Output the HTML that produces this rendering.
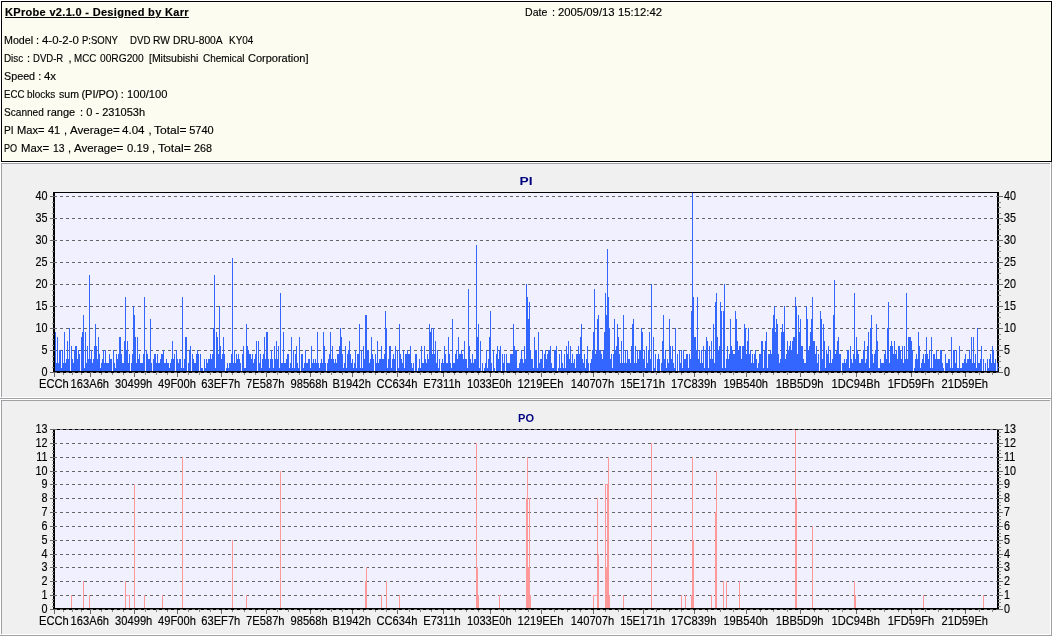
<!DOCTYPE html>
<html lang="en"><head><meta charset="utf-8"><title>KProbe v2.1.0</title>
<style>
html,body{margin:0;padding:0;background:#fff;}
body{width:1052px;height:636px;position:relative;overflow:hidden;font-family:"Liberation Sans","DejaVu Sans",sans-serif;font-size:11px;color:#000;}
#info{will-change:transform;position:absolute;left:1px;top:1px;width:1049px;height:159px;border:1px solid #000;background:#fcfcf0;box-shadow:inset 0 0 0 1px #fffffa;}
#info div,#info span{-webkit-text-stroke:.15px #000;position:absolute;white-space:pre;line-height:12px;height:12px;transform-origin:0 0;}
#info .h{font-weight:bold;text-decoration:underline;}
.panel{position:absolute;left:0;width:1052px;height:237px;background:#f0f0f0;box-shadow:inset -1px -1px 0 #a0a0a4,inset 1px 1px 0 #fff,inset -2px -2px 0 #fff,inset 2px 2px 0 #a0a0a4;}
.ch{position:absolute;left:0;will-change:transform;}
.l{font-family:"Liberation Sans","DejaVu Sans",sans-serif;font-size:12px;fill:#000;stroke:#000;stroke-width:.15px;}
.t{font-family:"Liberation Sans","DejaVu Sans",sans-serif;font-size:11px;font-weight:bold;fill:#000080;}
</style></head><body>
<div id="info">
<div class="h" style="left:3px;top:4px;letter-spacing:.32px">KProbe v2.1.0 - Designed by Karr</div>

<div class="ln" style="left:0;top:0">
<span style="left:2.4px;top:32px;transform:scaleX(0.972)">Model</span> 
<span style="left:34.0px;top:32px">:</span> 
<span style="left:40.0px;top:32px;transform:scaleX(1.038)">4-0-2-0</span> 
<span style="left:79.5px;top:32px;transform:scaleX(0.864)">P:SONY</span> 
<span style="left:128.0px;top:32px;transform:scaleX(0.876)">DVD</span> 
<span style="left:150.9px;top:32px;transform:scaleX(0.934)">RW</span> 
<span style="left:170.9px;top:32px;transform:scaleX(0.934)">DRU-800A</span> 
<span style="left:227.2px;top:32px;transform:scaleX(0.903)">KY04</span> 
</div>
<div class="ln" style="left:0;top:0">
<span style="left:2.4px;top:50px;transform:scaleX(0.895)">Disc</span> 
<span style="left:25.0px;top:50px">:</span> 
<span style="left:31.2px;top:50px;transform:scaleX(0.869)">DVD-R</span> 
<span style="left:66.4px;top:50px">,</span> 
<span style="left:71.9px;top:50px;transform:scaleX(0.888)">MCC</span> 
<span style="left:97.8px;top:50px;transform:scaleX(0.928)">00RG200</span> 
<span style="left:147.4px;top:50px;transform:scaleX(0.951)">[Mitsubishi</span> 
<span style="left:200.7px;top:50px;transform:scaleX(0.905)">Chemical</span> 
<span style="left:246.0px;top:50px">Corporation]</span> 
</div>
<div class="ln" style="left:0;top:0">
<span style="left:2.4px;top:68px;transform:scaleX(0.978)">Speed</span> 
<span style="left:36.2px;top:68px">:</span> 
<span style="left:42.2px;top:68px;transform:scaleX(1.040)">4x</span> 
</div>
<div class="ln" style="left:0;top:0">
<span style="left:2.4px;top:86px;transform:scaleX(0.881)">ECC</span> 
<span style="left:25.4px;top:86px;transform:scaleX(0.906)">blocks</span> 
<span style="left:56.9px;top:86px;transform:scaleX(0.960)">sum</span> 
<span style="left:79.4px;top:86px">(PI/PO)</span> 
<span style="left:118.8px;top:86px">:</span> 
<span style="left:125.3px;top:86px;transform:scaleX(1.017)">100/100</span> 
</div>
<div class="ln" style="left:0;top:0">
<span style="left:2.4px;top:104px;transform:scaleX(0.917)">Scanned</span> 
<span style="left:45.1px;top:104px">range</span> 
<span style="left:78.0px;top:104px">:</span> 
<span style="left:84.2px;top:104px">0</span> 
<span style="left:93.6px;top:104px">-</span> 
<span style="left:100.2px;top:104px">231053h</span> 
</div>
<div class="ln" style="left:0;top:0">
<span style="left:2.4px;top:122px;transform:scaleX(0.929)">PI</span> 
<span style="left:14.9px;top:122px;transform:scaleX(1.016)">Max=</span> 
<span style="left:45.9px;top:122px">41</span> 
<span style="left:62.0px;top:122px">,</span> 
<span style="left:68.4px;top:122px;transform:scaleX(1.052)">Average=</span> 
<span style="left:120.3px;top:122px;transform:scaleX(1.052)">4.04</span> 
<span style="left:146.4px;top:122px">,</span> 
<span style="left:152.2px;top:122px;transform:scaleX(1.095)">Total=</span> 
<span style="left:187.2px;top:122px">5740</span> 
</div>
<div class="ln" style="left:0;top:0">
<span style="left:2.4px;top:140px;transform:scaleX(0.826)">PO</span> 
<span style="left:19.3px;top:140px;transform:scaleX(1.031)">Max=</span> 
<span style="left:51.0px;top:140px;transform:scaleX(0.941)">13</span> 
<span style="left:66.0px;top:140px">,</span> 
<span style="left:72.4px;top:140px;transform:scaleX(1.045)">Average=</span> 
<span style="left:124.6px;top:140px;transform:scaleX(1.024)">0.19</span> 
<span style="left:150.1px;top:140px">,</span> 
<span style="left:155.9px;top:140px;transform:scaleX(1.105)">Total=</span> 
<span style="left:191.5px;top:140px;transform:scaleX(0.982)">268</span> 
</div>
<div class="ln" style="left:0;top:0">
<span style="left:523.4px;top:4px;transform:scaleX(0.960)">Date</span> 
<span style="left:550.0px;top:4px">:</span> 
<span style="left:556.0px;top:4px;transform:scaleX(1.028)">2005/09/13</span> 
<span style="left:615.6px;top:4px;transform:scaleX(1.030)">15:12:42</span> 
</div>
</div>
<div class="panel" style="top:162px"></div>
<div class="panel" style="top:399px"></div>
<svg class="ch" style="top:162px" width="1052" height="237" viewBox="0 162 1052 237">
<rect x="55" y="192" width="942" height="180" fill="#f0f0ff"/>
<path d="M54 372.5H997M54 350.5H997M54 328.5H997M54 306.5H997M54 284.5H997M54 262.5H997M54 240.5H997M54 218.5H997M54 196.5H997" stroke="#666" stroke-width="1" stroke-dasharray="3 3" fill="none" shape-rendering="crispEdges"/>
<path d="M55 332h1V372h-1zM56 363h1V372h-1zM57 337h1V372h-1zM58 363h1V372h-1zM59 350h1V372h-1zM60 350h1V372h-1zM61 368h1V372h-1zM62 350h1V372h-1zM63 363h1V372h-1zM64 332h1V372h-1zM65 363h1V372h-1zM66 359h1V372h-1zM67 341h1V372h-1zM68 359h1V372h-1zM69 328h1V372h-1zM71 346h1V372h-1zM72 359h1V372h-1zM73 363h1V372h-1zM74 350h1V372h-1zM75 346h1V372h-1zM76 346h1V372h-1zM77 359h1V372h-1zM78 350h1V372h-1zM79 354h1V372h-1zM81 337h1V372h-1zM82 332h1V372h-1zM83 315h1V372h-1zM84 368h1V372h-1zM85 332h1V372h-1zM86 363h1V372h-1zM87 346h1V372h-1zM88 359h1V372h-1zM89 275h1V372h-1zM90 359h1V372h-1zM91 350h1V372h-1zM92 363h1V372h-1zM93 359h1V372h-1zM94 346h1V372h-1zM95 324h1V372h-1zM96 346h1V372h-1zM97 359h1V372h-1zM98 337h1V372h-1zM99 354h1V372h-1zM100 368h1V372h-1zM101 363h1V372h-1zM102 359h1V372h-1zM103 350h1V372h-1zM104 363h1V372h-1zM105 350h1V372h-1zM106 363h1V372h-1zM107 363h1V372h-1zM108 363h1V372h-1zM109 354h1V372h-1zM110 359h1V372h-1zM111 359h1V372h-1zM113 350h1V372h-1zM114 363h1V372h-1zM115 368h1V372h-1zM116 354h1V372h-1zM117 359h1V372h-1zM118 354h1V372h-1zM119 337h1V372h-1zM120 337h1V372h-1zM121 354h1V372h-1zM122 363h1V372h-1zM123 363h1V372h-1zM124 341h1V372h-1zM125 297h1V372h-1zM126 350h1V372h-1zM127 341h1V372h-1zM128 363h1V372h-1zM129 354h1V372h-1zM131 363h1V372h-1zM132 354h1V372h-1zM133 306h1V372h-1zM134 315h1V372h-1zM135 337h1V372h-1zM136 363h1V372h-1zM137 337h1V372h-1zM138 359h1V372h-1zM139 354h1V372h-1zM140 363h1V372h-1zM141 363h1V372h-1zM142 363h1V372h-1zM143 354h1V372h-1zM144 297h1V372h-1zM146 350h1V372h-1zM147 354h1V372h-1zM148 359h1V372h-1zM149 359h1V372h-1zM150 319h1V372h-1zM151 363h1V372h-1zM153 359h1V372h-1zM154 354h1V372h-1zM155 354h1V372h-1zM156 363h1V372h-1zM157 354h1V372h-1zM158 363h1V372h-1zM159 363h1V372h-1zM160 359h1V372h-1zM161 354h1V372h-1zM162 354h1V372h-1zM163 350h1V372h-1zM164 363h1V372h-1zM165 363h1V372h-1zM166 359h1V372h-1zM167 363h1V372h-1zM168 363h1V372h-1zM169 368h1V372h-1zM170 363h1V372h-1zM171 359h1V372h-1zM172 341h1V372h-1zM173 359h1V372h-1zM174 354h1V372h-1zM176 350h1V372h-1zM177 359h1V372h-1zM178 363h1V372h-1zM179 359h1V372h-1zM180 359h1V372h-1zM181 368h1V372h-1zM182 297h1V372h-1zM183 368h1V372h-1zM184 359h1V372h-1zM185 337h1V372h-1zM186 337h1V372h-1zM188 363h1V372h-1zM189 350h1V372h-1zM190 346h1V372h-1zM192 354h1V372h-1zM193 359h1V372h-1zM194 363h1V372h-1zM195 363h1V372h-1zM196 354h1V372h-1zM197 350h1V372h-1zM198 354h1V372h-1zM200 354h1V372h-1zM201 368h1V372h-1zM202 368h1V372h-1zM204 359h1V372h-1zM205 368h1V372h-1zM206 359h1V372h-1zM207 363h1V372h-1zM208 359h1V372h-1zM209 359h1V372h-1zM210 354h1V372h-1zM211 359h1V372h-1zM212 354h1V372h-1zM213 328h1V372h-1zM214 275h1V372h-1zM215 368h1V372h-1zM216 332h1V372h-1zM217 337h1V372h-1zM218 354h1V372h-1zM219 306h1V372h-1zM220 346h1V372h-1zM221 359h1V372h-1zM222 354h1V372h-1zM223 337h1V372h-1zM224 354h1V372h-1zM226 368h1V372h-1zM227 363h1V372h-1zM228 368h1V372h-1zM229 363h1V372h-1zM230 363h1V372h-1zM231 354h1V372h-1zM232 258h1V372h-1zM233 363h1V372h-1zM234 350h1V372h-1zM235 363h1V372h-1zM236 354h1V372h-1zM237 359h1V372h-1zM238 354h1V372h-1zM239 359h1V372h-1zM240 363h1V372h-1zM242 354h1V372h-1zM243 346h1V372h-1zM244 368h1V372h-1zM245 368h1V372h-1zM246 324h1V372h-1zM247 346h1V372h-1zM248 350h1V372h-1zM249 354h1V372h-1zM250 354h1V372h-1zM251 359h1V372h-1zM252 354h1V372h-1zM253 363h1V372h-1zM254 359h1V372h-1zM255 354h1V372h-1zM256 341h1V372h-1zM258 341h1V372h-1zM259 363h1V372h-1zM260 354h1V372h-1zM261 368h1V372h-1zM262 359h1V372h-1zM263 354h1V372h-1zM264 337h1V372h-1zM265 359h1V372h-1zM266 332h1V372h-1zM267 332h1V372h-1zM268 359h1V372h-1zM269 368h1V372h-1zM270 359h1V372h-1zM271 350h1V372h-1zM272 359h1V372h-1zM273 368h1V372h-1zM274 346h1V372h-1zM275 359h1V372h-1zM276 341h1V372h-1zM277 359h1V372h-1zM278 346h1V372h-1zM279 368h1V372h-1zM280 293h1V372h-1zM281 363h1V372h-1zM282 363h1V372h-1zM283 332h1V372h-1zM284 363h1V372h-1zM285 363h1V372h-1zM286 359h1V372h-1zM287 354h1V372h-1zM288 354h1V372h-1zM289 368h1V372h-1zM290 363h1V372h-1zM291 337h1V372h-1zM292 368h1V372h-1zM293 350h1V372h-1zM294 368h1V372h-1zM295 354h1V372h-1zM296 346h1V372h-1zM297 363h1V372h-1zM298 368h1V372h-1zM299 337h1V372h-1zM301 354h1V372h-1zM302 354h1V372h-1zM303 368h1V372h-1zM304 363h1V372h-1zM305 350h1V372h-1zM306 363h1V372h-1zM307 363h1V372h-1zM308 359h1V372h-1zM309 359h1V372h-1zM310 368h1V372h-1zM311 346h1V372h-1zM312 363h1V372h-1zM313 359h1V372h-1zM314 363h1V372h-1zM315 359h1V372h-1zM316 363h1V372h-1zM317 332h1V372h-1zM318 363h1V372h-1zM319 368h1V372h-1zM320 363h1V372h-1zM321 359h1V372h-1zM322 363h1V372h-1zM323 332h1V372h-1zM324 346h1V372h-1zM325 363h1V372h-1zM327 363h1V372h-1zM328 359h1V372h-1zM329 354h1V372h-1zM330 332h1V372h-1zM331 359h1V372h-1zM332 346h1V372h-1zM333 359h1V372h-1zM334 363h1V372h-1zM335 359h1V372h-1zM336 363h1V372h-1zM337 354h1V372h-1zM338 354h1V372h-1zM339 346h1V372h-1zM340 328h1V372h-1zM341 337h1V372h-1zM342 354h1V372h-1zM343 368h1V372h-1zM344 363h1V372h-1zM345 346h1V372h-1zM346 368h1V372h-1zM347 354h1V372h-1zM348 350h1V372h-1zM349 341h1V372h-1zM350 354h1V372h-1zM351 363h1V372h-1zM352 359h1V372h-1zM353 368h1V372h-1zM354 363h1V372h-1zM355 350h1V372h-1zM356 368h1V372h-1zM357 354h1V372h-1zM358 354h1V372h-1zM359 324h1V372h-1zM360 368h1V372h-1zM361 350h1V372h-1zM362 368h1V372h-1zM363 346h1V372h-1zM364 359h1V372h-1zM365 315h1V372h-1zM366 315h1V372h-1zM367 350h1V372h-1zM368 350h1V372h-1zM369 363h1V372h-1zM370 359h1V372h-1zM371 337h1V372h-1zM372 354h1V372h-1zM373 359h1V372h-1zM375 354h1V372h-1zM376 363h1V372h-1zM377 341h1V372h-1zM378 363h1V372h-1zM379 359h1V372h-1zM380 359h1V372h-1zM381 346h1V372h-1zM382 359h1V372h-1zM383 359h1V372h-1zM384 354h1V372h-1zM385 311h1V372h-1zM386 328h1V372h-1zM387 368h1V372h-1zM388 359h1V372h-1zM389 346h1V372h-1zM390 346h1V372h-1zM391 368h1V372h-1zM392 359h1V372h-1zM393 354h1V372h-1zM394 359h1V372h-1zM395 346h1V372h-1zM397 350h1V372h-1zM398 368h1V372h-1zM399 324h1V372h-1zM400 354h1V372h-1zM401 359h1V372h-1zM402 363h1V372h-1zM403 350h1V372h-1zM404 368h1V372h-1zM405 354h1V372h-1zM406 354h1V372h-1zM407 350h1V372h-1zM408 354h1V372h-1zM409 354h1V372h-1zM410 346h1V372h-1zM411 363h1V372h-1zM412 368h1V372h-1zM413 363h1V372h-1zM415 354h1V372h-1zM416 354h1V372h-1zM418 368h1V372h-1zM419 359h1V372h-1zM420 368h1V372h-1zM421 346h1V372h-1zM422 363h1V372h-1zM423 363h1V372h-1zM424 346h1V372h-1zM425 359h1V372h-1zM426 363h1V372h-1zM427 354h1V372h-1zM428 359h1V372h-1zM429 324h1V372h-1zM430 332h1V372h-1zM431 328h1V372h-1zM432 354h1V372h-1zM433 328h1V372h-1zM434 354h1V372h-1zM435 341h1V372h-1zM436 363h1V372h-1zM437 350h1V372h-1zM438 368h1V372h-1zM439 359h1V372h-1zM441 363h1V372h-1zM442 359h1V372h-1zM443 363h1V372h-1zM444 346h1V372h-1zM445 354h1V372h-1zM446 363h1V372h-1zM447 363h1V372h-1zM448 337h1V372h-1zM449 354h1V372h-1zM450 363h1V372h-1zM451 368h1V372h-1zM452 319h1V372h-1zM453 363h1V372h-1zM454 363h1V372h-1zM455 354h1V372h-1zM456 350h1V372h-1zM457 359h1V372h-1zM458 337h1V372h-1zM459 354h1V372h-1zM460 354h1V372h-1zM461 350h1V372h-1zM462 354h1V372h-1zM463 359h1V372h-1zM464 341h1V372h-1zM465 359h1V372h-1zM466 359h1V372h-1zM467 368h1V372h-1zM468 289h1V372h-1zM469 346h1V372h-1zM470 359h1V372h-1zM471 363h1V372h-1zM472 354h1V372h-1zM473 363h1V372h-1zM474 359h1V372h-1zM475 359h1V372h-1zM476 245h1V372h-1zM477 337h1V372h-1zM478 324h1V372h-1zM479 368h1V372h-1zM480 341h1V372h-1zM482 363h1V372h-1zM484 368h1V372h-1zM485 363h1V372h-1zM486 350h1V372h-1zM487 368h1V372h-1zM488 359h1V372h-1zM489 337h1V372h-1zM490 311h1V372h-1zM491 363h1V372h-1zM493 350h1V372h-1zM494 368h1V372h-1zM496 354h1V372h-1zM497 346h1V372h-1zM498 359h1V372h-1zM499 350h1V372h-1zM500 346h1V372h-1zM502 354h1V372h-1zM503 363h1V372h-1zM504 354h1V372h-1zM506 354h1V372h-1zM507 363h1V372h-1zM508 363h1V372h-1zM509 363h1V372h-1zM510 354h1V372h-1zM511 354h1V372h-1zM512 354h1V372h-1zM513 324h1V372h-1zM514 346h1V372h-1zM515 350h1V372h-1zM516 350h1V372h-1zM517 368h1V372h-1zM518 368h1V372h-1zM519 363h1V372h-1zM520 359h1V372h-1zM521 350h1V372h-1zM522 359h1V372h-1zM523 363h1V372h-1zM524 346h1V372h-1zM525 359h1V372h-1zM526 284h1V372h-1zM527 297h1V372h-1zM528 319h1V372h-1zM529 302h1V372h-1zM530 350h1V372h-1zM531 359h1V372h-1zM532 359h1V372h-1zM533 368h1V372h-1zM534 337h1V372h-1zM535 350h1V372h-1zM536 350h1V372h-1zM537 368h1V372h-1zM538 332h1V372h-1zM539 363h1V372h-1zM540 359h1V372h-1zM541 359h1V372h-1zM542 350h1V372h-1zM543 368h1V372h-1zM544 354h1V372h-1zM545 350h1V372h-1zM546 359h1V372h-1zM547 354h1V372h-1zM548 350h1V372h-1zM549 350h1V372h-1zM550 346h1V372h-1zM551 363h1V372h-1zM552 368h1V372h-1zM553 368h1V372h-1zM554 350h1V372h-1zM555 350h1V372h-1zM556 346h1V372h-1zM558 368h1V372h-1zM559 354h1V372h-1zM560 368h1V372h-1zM561 350h1V372h-1zM562 363h1V372h-1zM563 368h1V372h-1zM564 354h1V372h-1zM565 368h1V372h-1zM566 346h1V372h-1zM567 354h1V372h-1zM568 341h1V372h-1zM569 359h1V372h-1zM570 346h1V372h-1zM571 363h1V372h-1zM572 354h1V372h-1zM573 363h1V372h-1zM574 359h1V372h-1zM575 368h1V372h-1zM576 354h1V372h-1zM577 354h1V372h-1zM578 346h1V372h-1zM579 354h1V372h-1zM580 337h1V372h-1zM581 324h1V372h-1zM582 359h1V372h-1zM583 363h1V372h-1zM584 354h1V372h-1zM585 368h1V372h-1zM586 359h1V372h-1zM587 346h1V372h-1zM588 363h1V372h-1zM590 363h1V372h-1zM591 359h1V372h-1zM592 350h1V372h-1zM593 332h1V372h-1zM594 289h1V372h-1zM595 354h1V372h-1zM596 350h1V372h-1zM597 319h1V372h-1zM598 315h1V372h-1zM599 350h1V372h-1zM600 350h1V372h-1zM601 354h1V372h-1zM602 359h1V372h-1zM603 350h1V372h-1zM604 332h1V372h-1zM605 293h1V372h-1zM606 315h1V372h-1zM607 249h1V372h-1zM608 297h1V372h-1zM609 328h1V372h-1zM610 359h1V372h-1zM611 354h1V372h-1zM612 368h1V372h-1zM613 354h1V372h-1zM614 319h1V372h-1zM615 350h1V372h-1zM616 346h1V372h-1zM617 324h1V372h-1zM618 337h1V372h-1zM619 354h1V372h-1zM620 363h1V372h-1zM621 341h1V372h-1zM622 363h1V372h-1zM623 315h1V372h-1zM624 363h1V372h-1zM625 350h1V372h-1zM626 363h1V372h-1zM627 350h1V372h-1zM628 359h1V372h-1zM629 359h1V372h-1zM630 363h1V372h-1zM631 346h1V372h-1zM632 324h1V372h-1zM633 319h1V372h-1zM634 363h1V372h-1zM635 346h1V372h-1zM636 363h1V372h-1zM637 350h1V372h-1zM638 359h1V372h-1zM639 350h1V372h-1zM640 350h1V372h-1zM641 328h1V372h-1zM642 332h1V372h-1zM643 359h1V372h-1zM644 350h1V372h-1zM645 368h1V372h-1zM646 346h1V372h-1zM647 363h1V372h-1zM648 350h1V372h-1zM649 332h1V372h-1zM650 359h1V372h-1zM651 284h1V372h-1zM653 337h1V372h-1zM654 368h1V372h-1zM655 354h1V372h-1zM657 359h1V372h-1zM658 354h1V372h-1zM659 359h1V372h-1zM661 363h1V372h-1zM662 341h1V372h-1zM663 315h1V372h-1zM664 359h1V372h-1zM665 350h1V372h-1zM666 368h1V372h-1zM667 359h1V372h-1zM668 363h1V372h-1zM669 319h1V372h-1zM670 346h1V372h-1zM671 359h1V372h-1zM672 346h1V372h-1zM673 363h1V372h-1zM674 368h1V372h-1zM675 328h1V372h-1zM677 354h1V372h-1zM679 350h1V372h-1zM680 363h1V372h-1zM681 350h1V372h-1zM682 368h1V372h-1zM683 350h1V372h-1zM684 359h1V372h-1zM685 359h1V372h-1zM686 354h1V372h-1zM687 354h1V372h-1zM688 368h1V372h-1zM689 354h1V372h-1zM690 359h1V372h-1zM691 311h1V372h-1zM692 192h1V372h-1zM693 297h1V372h-1zM694 337h1V372h-1zM695 337h1V372h-1zM696 350h1V372h-1zM697 297h1V372h-1zM698 359h1V372h-1zM699 350h1V372h-1zM700 363h1V372h-1zM701 350h1V372h-1zM702 363h1V372h-1zM703 346h1V372h-1zM704 368h1V372h-1zM705 350h1V372h-1zM706 337h1V372h-1zM707 341h1V372h-1zM708 368h1V372h-1zM709 346h1V372h-1zM710 359h1V372h-1zM711 341h1V372h-1zM712 359h1V372h-1zM713 324h1V372h-1zM714 363h1V372h-1zM715 302h1V372h-1zM716 293h1V372h-1zM717 337h1V372h-1zM718 350h1V372h-1zM719 346h1V372h-1zM720 302h1V372h-1zM721 311h1V372h-1zM722 368h1V372h-1zM723 311h1V372h-1zM724 284h1V372h-1zM725 368h1V372h-1zM726 359h1V372h-1zM727 346h1V372h-1zM728 359h1V372h-1zM729 354h1V372h-1zM730 319h1V372h-1zM731 346h1V372h-1zM732 350h1V372h-1zM733 354h1V372h-1zM734 354h1V372h-1zM735 311h1V372h-1zM736 319h1V372h-1zM737 341h1V372h-1zM738 350h1V372h-1zM739 346h1V372h-1zM740 346h1V372h-1zM741 359h1V372h-1zM742 346h1V372h-1zM743 346h1V372h-1zM744 324h1V372h-1zM745 328h1V372h-1zM746 354h1V372h-1zM747 341h1V372h-1zM748 328h1V372h-1zM749 354h1V372h-1zM750 350h1V372h-1zM751 363h1V372h-1zM752 354h1V372h-1zM753 363h1V372h-1zM754 354h1V372h-1zM755 350h1V372h-1zM756 359h1V372h-1zM757 368h1V372h-1zM758 363h1V372h-1zM759 354h1V372h-1zM760 354h1V372h-1zM761 341h1V372h-1zM762 341h1V372h-1zM763 368h1V372h-1zM764 350h1V372h-1zM765 341h1V372h-1zM766 332h1V372h-1zM767 368h1V372h-1zM768 354h1V372h-1zM769 354h1V372h-1zM770 350h1V372h-1zM771 354h1V372h-1zM772 328h1V372h-1zM773 315h1V372h-1zM774 306h1V372h-1zM775 332h1V372h-1zM776 319h1V372h-1zM777 324h1V372h-1zM778 354h1V372h-1zM779 363h1V372h-1zM780 359h1V372h-1zM781 332h1V372h-1zM782 324h1V372h-1zM783 332h1V372h-1zM784 306h1V372h-1zM785 359h1V372h-1zM786 354h1V372h-1zM787 341h1V372h-1zM788 350h1V372h-1zM789 346h1V372h-1zM790 341h1V372h-1zM791 350h1V372h-1zM792 341h1V372h-1zM793 337h1V372h-1zM794 337h1V372h-1zM795 297h1V372h-1zM796 306h1V372h-1zM797 354h1V372h-1zM798 315h1V372h-1zM799 332h1V372h-1zM800 319h1V372h-1zM801 346h1V372h-1zM802 346h1V372h-1zM803 359h1V372h-1zM804 363h1V372h-1zM805 363h1V372h-1zM806 306h1V372h-1zM807 319h1V372h-1zM808 350h1V372h-1zM809 346h1V372h-1zM810 332h1V372h-1zM811 319h1V372h-1zM812 297h1V372h-1zM813 341h1V372h-1zM814 341h1V372h-1zM815 354h1V372h-1zM816 346h1V372h-1zM817 363h1V372h-1zM818 354h1V372h-1zM820 311h1V372h-1zM821 319h1V372h-1zM822 359h1V372h-1zM823 324h1V372h-1zM824 341h1V372h-1zM825 368h1V372h-1zM826 350h1V372h-1zM827 354h1V372h-1zM828 346h1V372h-1zM829 363h1V372h-1zM830 350h1V372h-1zM831 363h1V372h-1zM832 359h1V372h-1zM833 315h1V372h-1zM834 280h1V372h-1zM835 354h1V372h-1zM836 350h1V372h-1zM837 341h1V372h-1zM838 337h1V372h-1zM839 354h1V372h-1zM840 354h1V372h-1zM842 363h1V372h-1zM843 363h1V372h-1zM844 359h1V372h-1zM845 363h1V372h-1zM846 359h1V372h-1zM847 350h1V372h-1zM848 350h1V372h-1zM849 368h1V372h-1zM850 346h1V372h-1zM851 359h1V372h-1zM852 363h1V372h-1zM853 354h1V372h-1zM854 293h1V372h-1zM855 359h1V372h-1zM856 337h1V372h-1zM857 350h1V372h-1zM858 354h1V372h-1zM859 363h1V372h-1zM860 363h1V372h-1zM861 359h1V372h-1zM862 359h1V372h-1zM863 350h1V372h-1zM864 341h1V372h-1zM865 363h1V372h-1zM866 359h1V372h-1zM867 346h1V372h-1zM868 332h1V372h-1zM869 368h1V372h-1zM870 328h1V372h-1zM871 315h1V372h-1zM872 354h1V372h-1zM873 363h1V372h-1zM874 354h1V372h-1zM875 350h1V372h-1zM876 324h1V372h-1zM877 341h1V372h-1zM878 368h1V372h-1zM879 368h1V372h-1zM880 359h1V372h-1zM881 363h1V372h-1zM882 363h1V372h-1zM883 363h1V372h-1zM884 354h1V372h-1zM885 350h1V372h-1zM886 359h1V372h-1zM887 328h1V372h-1zM888 302h1V372h-1zM889 363h1V372h-1zM890 346h1V372h-1zM891 341h1V372h-1zM892 346h1V372h-1zM893 354h1V372h-1zM894 341h1V372h-1zM895 354h1V372h-1zM896 350h1V372h-1zM897 359h1V372h-1zM898 346h1V372h-1zM899 346h1V372h-1zM900 350h1V372h-1zM901 359h1V372h-1zM902 346h1V372h-1zM903 363h1V372h-1zM904 346h1V372h-1zM905 359h1V372h-1zM906 293h1V372h-1zM907 359h1V372h-1zM908 337h1V372h-1zM909 337h1V372h-1zM910 337h1V372h-1zM911 341h1V372h-1zM912 350h1V372h-1zM914 368h1V372h-1zM915 359h1V372h-1zM916 354h1V372h-1zM917 359h1V372h-1zM918 332h1V372h-1zM919 346h1V372h-1zM920 368h1V372h-1zM921 363h1V372h-1zM922 359h1V372h-1zM923 354h1V372h-1zM924 363h1V372h-1zM925 354h1V372h-1zM926 337h1V372h-1zM927 354h1V372h-1zM928 359h1V372h-1zM929 350h1V372h-1zM930 368h1V372h-1zM931 337h1V372h-1zM932 368h1V372h-1zM933 354h1V372h-1zM934 354h1V372h-1zM935 359h1V372h-1zM936 350h1V372h-1zM937 359h1V372h-1zM938 359h1V372h-1zM939 359h1V372h-1zM940 350h1V372h-1zM941 350h1V372h-1zM942 363h1V372h-1zM943 368h1V372h-1zM945 354h1V372h-1zM946 363h1V372h-1zM947 363h1V372h-1zM948 359h1V372h-1zM949 359h1V372h-1zM950 368h1V372h-1zM951 337h1V372h-1zM952 368h1V372h-1zM953 350h1V372h-1zM954 350h1V372h-1zM955 363h1V372h-1zM956 350h1V372h-1zM957 368h1V372h-1zM958 368h1V372h-1zM959 346h1V372h-1zM960 368h1V372h-1zM961 368h1V372h-1zM962 363h1V372h-1zM963 363h1V372h-1zM964 359h1V372h-1zM965 354h1V372h-1zM966 363h1V372h-1zM967 359h1V372h-1zM968 359h1V372h-1zM969 350h1V372h-1zM970 359h1V372h-1zM971 337h1V372h-1zM972 363h1V372h-1zM973 337h1V372h-1zM974 363h1V372h-1zM975 354h1V372h-1zM976 368h1V372h-1zM977 328h1V372h-1zM978 363h1V372h-1zM979 363h1V372h-1zM980 359h1V372h-1zM981 346h1V372h-1zM983 359h1V372h-1zM985 363h1V372h-1zM987 359h1V372h-1zM988 368h1V372h-1zM989 359h1V372h-1zM990 354h1V372h-1zM991 363h1V372h-1zM992 346h1V372h-1zM993 350h1V372h-1zM994 363h1V372h-1zM995 359h1V372h-1z" fill="#36f" shape-rendering="crispEdges"/>
<path d="M54 192V373M998 192V373" stroke="#000" stroke-width="2" fill="none" shape-rendering="crispEdges"/>
<path d="M53 192.5H999M53 372.5H999M53 371.5H999" stroke="#000" stroke-width="1" fill="none" shape-rendering="crispEdges"/>
<rect x="997" y="363" width="1" height="8" fill="#36f" shape-rendering="crispEdges"/>
<path d="M54 372.5H997" stroke="#777" stroke-width="1" stroke-dasharray="3 3" fill="none" shape-rendering="crispEdges"/>
<path d="M52 372.5H54M998 372.5H1001M52 367.5H54M998 367.5H1001M52 361.5H54M998 361.5H1001M52 356.5H54M998 356.5H1001M52 350.5H54M998 350.5H1001M52 345.5H54M998 345.5H1001M52 339.5H54M998 339.5H1001M52 334.5H54M998 334.5H1001M52 328.5H54M998 328.5H1001M52 323.5H54M998 323.5H1001M52 317.5H54M998 317.5H1001M52 312.5H54M998 312.5H1001M52 306.5H54M998 306.5H1001M52 301.5H54M998 301.5H1001M52 295.5H54M998 295.5H1001M52 290.5H54M998 290.5H1001M52 284.5H54M998 284.5H1001M52 279.5H54M998 279.5H1001M52 273.5H54M998 273.5H1001M52 268.5H54M998 268.5H1001M52 262.5H54M998 262.5H1001M52 257.5H54M998 257.5H1001M52 251.5H54M998 251.5H1001M52 246.5H54M998 246.5H1001M52 240.5H54M998 240.5H1001M52 235.5H54M998 235.5H1001M52 229.5H54M998 229.5H1001M52 224.5H54M998 224.5H1001M52 218.5H54M998 218.5H1001M52 213.5H54M998 213.5H1001M52 207.5H54M998 207.5H1001M52 202.5H54M998 202.5H1001M52 196.5H54M998 196.5H1001" stroke="#888" stroke-width="1" fill="none" shape-rendering="crispEdges"/>
<path d="M50 372.5H55M996 372.5H1003M50 350.5H55M996 350.5H1003M50 328.5H55M996 328.5H1003M50 306.5H55M996 306.5H1003M50 284.5H55M996 284.5H1003M50 262.5H55M996 262.5H1003M50 240.5H55M996 240.5H1003M50 218.5H55M996 218.5H1003M50 196.5H55M996 196.5H1003" stroke="#666" stroke-width="1" fill="none" shape-rendering="crispEdges"/>
<path d="M63.5 373V375M72.5 373V375M81.5 373V375M101.5 373V375M112.5 373V375M123.5 373V375M145.5 373V375M156.5 373V375M167.5 373V375M188.5 373V375M199.5 373V375M210.5 373V375M232.5 373V375M244.5 373V375M255.5 373V375M277.5 373V375M288.5 373V375M299.5 373V375M320.5 373V375M331.5 373V375M342.5 373V375M363.5 373V375M375.5 373V375M386.5 373V375M409.5 373V375M420.5 373V375M431.5 373V375M454.5 373V375M466.5 373V375M478.5 373V375M503.5 373V375M515.5 373V375M528.5 373V375M554.5 373V375M567.5 373V375M580.5 373V375M605.5 373V375M618.5 373V375M630.5 373V375M656.5 373V375M669.5 373V375M681.5 373V375M707.5 373V375M720.5 373V375M733.5 373V375M760.5 373V375M773.5 373V375M787.5 373V375M814.5 373V375M828.5 373V375M842.5 373V375M870.5 373V375M884.5 373V375M898.5 373V375M925.5 373V375M938.5 373V375M952.5 373V375M979.5 373V375M992.5 373V375" stroke="#888" stroke-width="1" fill="none" shape-rendering="crispEdges"/>
<path d="M54.5 373V377M90.5 373V377M134.5 373V377M177.5 373V377M221.5 373V377M266.5 373V377M310.5 373V377M352.5 373V377M397.5 373V377M443.5 373V377M490.5 373V377M541.5 373V377M593.5 373V377M643.5 373V377M694.5 373V377M746.5 373V377M800.5 373V377M856.5 373V377M911.5 373V377M965.5 373V377" stroke="#666" stroke-width="1" fill="none" shape-rendering="crispEdges"/>
<text class="l" transform="translate(47.5 376) scale(.9 1)" text-anchor="end">0</text>
<text class="l" transform="translate(1004 376) scale(.9 1)">0</text>
<text class="l" transform="translate(47.5 354) scale(.9 1)" text-anchor="end">5</text>
<text class="l" transform="translate(1004 354) scale(.9 1)">5</text>
<text class="l" transform="translate(47.5 332) scale(.9 1)" text-anchor="end">10</text>
<text class="l" transform="translate(1004 332) scale(.9 1)">10</text>
<text class="l" transform="translate(47.5 310) scale(.9 1)" text-anchor="end">15</text>
<text class="l" transform="translate(1004 310) scale(.9 1)">15</text>
<text class="l" transform="translate(47.5 288) scale(.9 1)" text-anchor="end">20</text>
<text class="l" transform="translate(1004 288) scale(.9 1)">20</text>
<text class="l" transform="translate(47.5 266) scale(.9 1)" text-anchor="end">25</text>
<text class="l" transform="translate(1004 266) scale(.9 1)">25</text>
<text class="l" transform="translate(47.5 244) scale(.9 1)" text-anchor="end">30</text>
<text class="l" transform="translate(1004 244) scale(.9 1)">30</text>
<text class="l" transform="translate(47.5 222) scale(.9 1)" text-anchor="end">35</text>
<text class="l" transform="translate(1004 222) scale(.9 1)">35</text>
<text class="l" transform="translate(47.5 200) scale(.9 1)" text-anchor="end">40</text>
<text class="l" transform="translate(1004 200) scale(.9 1)">40</text>
<text class="l" transform="translate(53.9 388) scale(.93 1)" text-anchor="middle">ECCh</text>
<text class="l" transform="translate(89.8 388) scale(.93 1)" text-anchor="middle">163A6h</text>
<text class="l" transform="translate(133.7 388) scale(.93 1)" text-anchor="middle">30499h</text>
<text class="l" transform="translate(177.0 388) scale(.93 1)" text-anchor="middle">49F00h</text>
<text class="l" transform="translate(220.8 388) scale(.93 1)" text-anchor="middle">63EF7h</text>
<text class="l" transform="translate(265.3 388) scale(.93 1)" text-anchor="middle">7E587h</text>
<text class="l" transform="translate(309.1 388) scale(.93 1)" text-anchor="middle">98568h</text>
<text class="l" transform="translate(351.7 388) scale(.93 1)" text-anchor="middle">B1942h</text>
<text class="l" transform="translate(396.9 388) scale(.93 1)" text-anchor="middle">CC634h</text>
<text class="l" transform="translate(442.0 388) scale(.93 1)" text-anchor="middle">E7311h</text>
<text class="l" transform="translate(489.3 388) scale(.93 1)" text-anchor="middle">1033E0h</text>
<text class="l" transform="translate(540.5 388) scale(.93 1)" text-anchor="middle">1219EEh</text>
<text class="l" transform="translate(592.5 388) scale(.93 1)" text-anchor="middle">140707h</text>
<text class="l" transform="translate(642.5 388) scale(.93 1)" text-anchor="middle">15E171h</text>
<text class="l" transform="translate(693.7 388) scale(.93 1)" text-anchor="middle">17C839h</text>
<text class="l" transform="translate(745.7 388) scale(.93 1)" text-anchor="middle">19B540h</text>
<text class="l" transform="translate(799.7 388) scale(.93 1)" text-anchor="middle">1BB5D9h</text>
<text class="l" transform="translate(855.7 388) scale(.93 1)" text-anchor="middle">1DC94Bh</text>
<text class="l" transform="translate(910.9 388) scale(.93 1)" text-anchor="middle">1FD59Fh</text>
<text class="l" transform="translate(964.8 388) scale(.93 1)" text-anchor="middle">21D59Eh</text>
<text class="t" transform="translate(526 185) scale(1.25 1)" text-anchor="middle">PI</text>
</svg>
<svg class="ch" style="top:399px" width="1052" height="237" viewBox="0 399 1052 237">
<rect x="55" y="429" width="942" height="180" fill="#f0f0ff"/>
<path d="M54 609.5H997M54 595.5H997M54 581.5H997M54 567.5H997M54 554.5H997M54 540.5H997M54 526.5H997M54 512.5H997M54 498.5H997M54 484.5H997M54 471.5H997M54 457.5H997M54 443.5H997M54 429.5H997" stroke="#666" stroke-width="1" stroke-dasharray="3 3" fill="none" shape-rendering="crispEdges"/>
<path d="M71.5 595V609M83.5 581V609M89.5 595V609M125.5 581V609M125.5 609V595.5H129.5V609M134.5 484V609M144.5 595V609M162.5 595V609M182.5 457V609M232.5 540V609M246.5 595V609M280.5 471V609M365.5 581V609M366.5 567V609M381.5 595V609M386.5 581V609M399.5 595V609M476.5 443V609M477.5 567V609M478.5 595V609M499.5 595V609M526.5 498V609M527.5 457V609M528.5 567V609M529.5 498V609M530.5 595V609M593.5 609V595.5H597.5V609M597.5 498V609M598.5 554V609M605.5 609V484.5H607.5V609M606.5 567V609M608.5 457V609M609.5 595V609M623.5 595V609M651.5 443V609M681.5 595V609M685.5 595V609M691.5 595V609M692.5 457V609M693.5 540V609M711.5 595V609M715.5 512V609M716.5 471V609M723.5 581V609M726.5 581V609M739.5 581V609M795.5 429V609M796.5 498V609M812.5 526V609M854.5 581V609M855.5 595V609M923.5 595V609M983.5 595V609" stroke="#f99" stroke-width="1" fill="none" shape-rendering="crispEdges"/>
<path d="M54 429V610M998 429V610" stroke="#000" stroke-width="2" fill="none" shape-rendering="crispEdges"/>
<path d="M53 429.5H999M53 609.5H999M53 608.5H999" stroke="#000" stroke-width="1" fill="none" shape-rendering="crispEdges"/>
<path d="M54 609.5H997" stroke="#777" stroke-width="1" stroke-dasharray="3 3" fill="none" shape-rendering="crispEdges"/>
<path d="M54 429.5H997" stroke="#777" stroke-width="1" stroke-dasharray="3 3" fill="none" shape-rendering="crispEdges"/>
<path d="M52 609.5H54M998 609.5H1001M52 606.5H54M998 606.5H1001M52 602.5H54M998 602.5H1001M52 599.5H54M998 599.5H1001M52 595.5H54M998 595.5H1001M52 592.5H54M998 592.5H1001M52 588.5H54M998 588.5H1001M52 585.5H54M998 585.5H1001M52 581.5H54M998 581.5H1001M52 578.5H54M998 578.5H1001M52 574.5H54M998 574.5H1001M52 571.5H54M998 571.5H1001M52 567.5H54M998 567.5H1001M52 564.5H54M998 564.5H1001M52 561.5H54M998 561.5H1001M52 557.5H54M998 557.5H1001M52 554.5H54M998 554.5H1001M52 550.5H54M998 550.5H1001M52 547.5H54M998 547.5H1001M52 543.5H54M998 543.5H1001M52 540.5H54M998 540.5H1001M52 536.5H54M998 536.5H1001M52 533.5H54M998 533.5H1001M52 529.5H54M998 529.5H1001M52 526.5H54M998 526.5H1001M52 522.5H54M998 522.5H1001M52 519.5H54M998 519.5H1001M52 516.5H54M998 516.5H1001M52 512.5H54M998 512.5H1001M52 509.5H54M998 509.5H1001M52 505.5H54M998 505.5H1001M52 502.5H54M998 502.5H1001M52 498.5H54M998 498.5H1001M52 495.5H54M998 495.5H1001M52 491.5H54M998 491.5H1001M52 488.5H54M998 488.5H1001M52 484.5H54M998 484.5H1001M52 481.5H54M998 481.5H1001M52 477.5H54M998 477.5H1001M52 474.5H54M998 474.5H1001M52 471.5H54M998 471.5H1001M52 467.5H54M998 467.5H1001M52 464.5H54M998 464.5H1001M52 460.5H54M998 460.5H1001M52 457.5H54M998 457.5H1001M52 453.5H54M998 453.5H1001M52 450.5H54M998 450.5H1001M52 446.5H54M998 446.5H1001M52 443.5H54M998 443.5H1001M52 439.5H54M998 439.5H1001M52 436.5H54M998 436.5H1001M52 432.5H54M998 432.5H1001M52 429.5H54M998 429.5H1001" stroke="#888" stroke-width="1" fill="none" shape-rendering="crispEdges"/>
<path d="M50 609.5H55M996 609.5H1003M50 595.5H55M996 595.5H1003M50 581.5H55M996 581.5H1003M50 567.5H55M996 567.5H1003M50 554.5H55M996 554.5H1003M50 540.5H55M996 540.5H1003M50 526.5H55M996 526.5H1003M50 512.5H55M996 512.5H1003M50 498.5H55M996 498.5H1003M50 484.5H55M996 484.5H1003M50 471.5H55M996 471.5H1003M50 457.5H55M996 457.5H1003M50 443.5H55M996 443.5H1003M50 429.5H55M996 429.5H1003" stroke="#666" stroke-width="1" fill="none" shape-rendering="crispEdges"/>
<path d="M63.5 610V612M72.5 610V612M81.5 610V612M101.5 610V612M112.5 610V612M123.5 610V612M145.5 610V612M156.5 610V612M167.5 610V612M188.5 610V612M199.5 610V612M210.5 610V612M232.5 610V612M244.5 610V612M255.5 610V612M277.5 610V612M288.5 610V612M299.5 610V612M320.5 610V612M331.5 610V612M342.5 610V612M363.5 610V612M375.5 610V612M386.5 610V612M409.5 610V612M420.5 610V612M431.5 610V612M454.5 610V612M466.5 610V612M478.5 610V612M503.5 610V612M515.5 610V612M528.5 610V612M554.5 610V612M567.5 610V612M580.5 610V612M605.5 610V612M618.5 610V612M630.5 610V612M656.5 610V612M669.5 610V612M681.5 610V612M707.5 610V612M720.5 610V612M733.5 610V612M760.5 610V612M773.5 610V612M787.5 610V612M814.5 610V612M828.5 610V612M842.5 610V612M870.5 610V612M884.5 610V612M898.5 610V612M925.5 610V612M938.5 610V612M952.5 610V612M979.5 610V612M992.5 610V612" stroke="#888" stroke-width="1" fill="none" shape-rendering="crispEdges"/>
<path d="M54.5 610V614M90.5 610V614M134.5 610V614M177.5 610V614M221.5 610V614M266.5 610V614M310.5 610V614M352.5 610V614M397.5 610V614M443.5 610V614M490.5 610V614M541.5 610V614M593.5 610V614M643.5 610V614M694.5 610V614M746.5 610V614M800.5 610V614M856.5 610V614M911.5 610V614M965.5 610V614" stroke="#666" stroke-width="1" fill="none" shape-rendering="crispEdges"/>
<text class="l" transform="translate(47.5 613) scale(.9 1)" text-anchor="end">0</text>
<text class="l" transform="translate(1004 613) scale(.9 1)">0</text>
<text class="l" transform="translate(47.5 599) scale(.9 1)" text-anchor="end">1</text>
<text class="l" transform="translate(1004 599) scale(.9 1)">1</text>
<text class="l" transform="translate(47.5 585) scale(.9 1)" text-anchor="end">2</text>
<text class="l" transform="translate(1004 585) scale(.9 1)">2</text>
<text class="l" transform="translate(47.5 571) scale(.9 1)" text-anchor="end">3</text>
<text class="l" transform="translate(1004 571) scale(.9 1)">3</text>
<text class="l" transform="translate(47.5 558) scale(.9 1)" text-anchor="end">4</text>
<text class="l" transform="translate(1004 558) scale(.9 1)">4</text>
<text class="l" transform="translate(47.5 544) scale(.9 1)" text-anchor="end">5</text>
<text class="l" transform="translate(1004 544) scale(.9 1)">5</text>
<text class="l" transform="translate(47.5 530) scale(.9 1)" text-anchor="end">6</text>
<text class="l" transform="translate(1004 530) scale(.9 1)">6</text>
<text class="l" transform="translate(47.5 516) scale(.9 1)" text-anchor="end">7</text>
<text class="l" transform="translate(1004 516) scale(.9 1)">7</text>
<text class="l" transform="translate(47.5 502) scale(.9 1)" text-anchor="end">8</text>
<text class="l" transform="translate(1004 502) scale(.9 1)">8</text>
<text class="l" transform="translate(47.5 488) scale(.9 1)" text-anchor="end">9</text>
<text class="l" transform="translate(1004 488) scale(.9 1)">9</text>
<text class="l" transform="translate(47.5 475) scale(.9 1)" text-anchor="end">10</text>
<text class="l" transform="translate(1004 475) scale(.9 1)">10</text>
<text class="l" transform="translate(47.5 461) scale(.9 1)" text-anchor="end">11</text>
<text class="l" transform="translate(1004 461) scale(.9 1)">11</text>
<text class="l" transform="translate(47.5 447) scale(.9 1)" text-anchor="end">12</text>
<text class="l" transform="translate(1004 447) scale(.9 1)">12</text>
<text class="l" transform="translate(47.5 433) scale(.9 1)" text-anchor="end">13</text>
<text class="l" transform="translate(1004 433) scale(.9 1)">13</text>
<text class="l" transform="translate(53.9 625) scale(.93 1)" text-anchor="middle">ECCh</text>
<text class="l" transform="translate(89.8 625) scale(.93 1)" text-anchor="middle">163A6h</text>
<text class="l" transform="translate(133.7 625) scale(.93 1)" text-anchor="middle">30499h</text>
<text class="l" transform="translate(177.0 625) scale(.93 1)" text-anchor="middle">49F00h</text>
<text class="l" transform="translate(220.8 625) scale(.93 1)" text-anchor="middle">63EF7h</text>
<text class="l" transform="translate(265.3 625) scale(.93 1)" text-anchor="middle">7E587h</text>
<text class="l" transform="translate(309.1 625) scale(.93 1)" text-anchor="middle">98568h</text>
<text class="l" transform="translate(351.7 625) scale(.93 1)" text-anchor="middle">B1942h</text>
<text class="l" transform="translate(396.9 625) scale(.93 1)" text-anchor="middle">CC634h</text>
<text class="l" transform="translate(442.0 625) scale(.93 1)" text-anchor="middle">E7311h</text>
<text class="l" transform="translate(489.3 625) scale(.93 1)" text-anchor="middle">1033E0h</text>
<text class="l" transform="translate(540.5 625) scale(.93 1)" text-anchor="middle">1219EEh</text>
<text class="l" transform="translate(592.5 625) scale(.93 1)" text-anchor="middle">140707h</text>
<text class="l" transform="translate(642.5 625) scale(.93 1)" text-anchor="middle">15E171h</text>
<text class="l" transform="translate(693.7 625) scale(.93 1)" text-anchor="middle">17C839h</text>
<text class="l" transform="translate(745.7 625) scale(.93 1)" text-anchor="middle">19B540h</text>
<text class="l" transform="translate(799.7 625) scale(.93 1)" text-anchor="middle">1BB5D9h</text>
<text class="l" transform="translate(855.7 625) scale(.93 1)" text-anchor="middle">1DC94Bh</text>
<text class="l" transform="translate(910.9 625) scale(.93 1)" text-anchor="middle">1FD59Fh</text>
<text class="l" transform="translate(964.8 625) scale(.93 1)" text-anchor="middle">21D59Eh</text>
<text class="t" transform="translate(526 422) scale(1 1)" text-anchor="middle">PO</text>
</svg>
</body></html>
